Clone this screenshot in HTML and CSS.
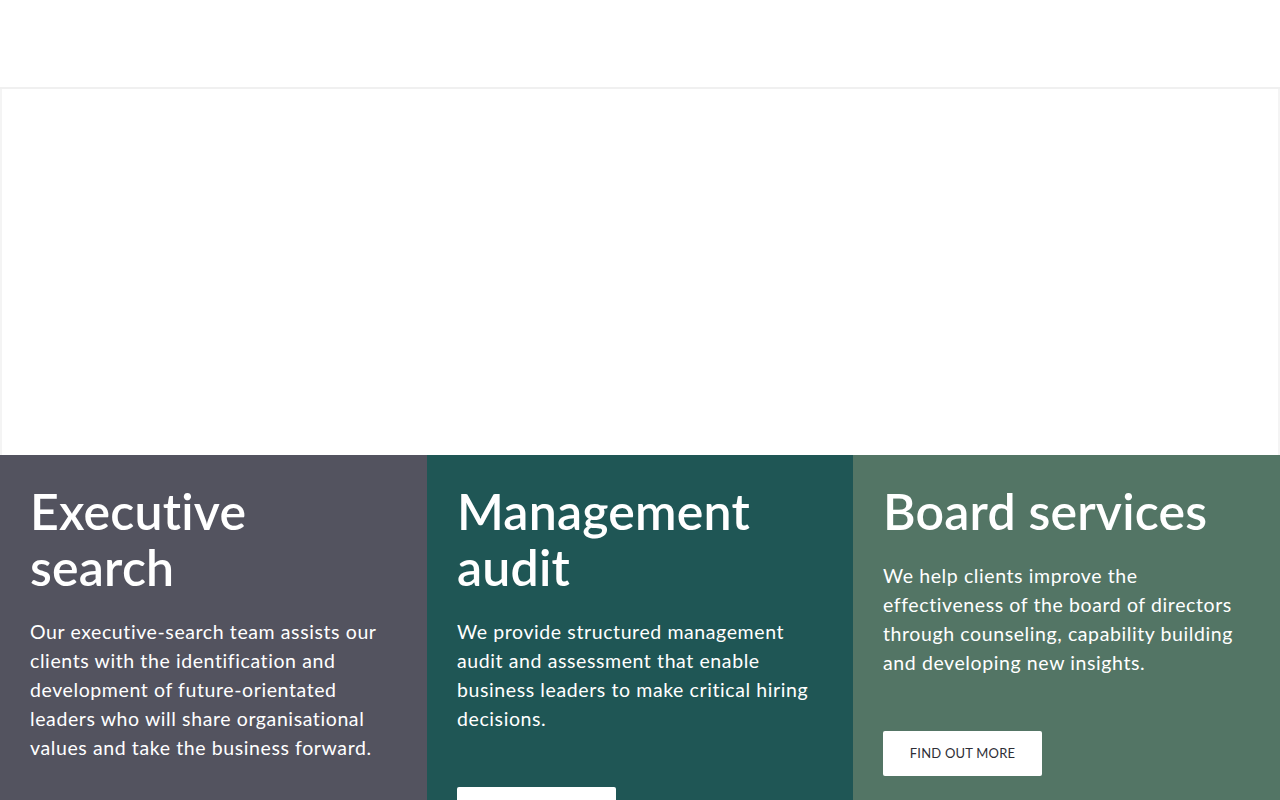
FILE: index.html
```html
<!DOCTYPE html>
<html lang="en">
<head>
    <meta charset="UTF-8">
    <meta name="viewport" content="width=device-width, initial-scale=1.0">
    <title>Services</title>
    <link rel="stylesheet" href="styles.css">
</head>
<body>

<header class="site-header"></header>

<div class="hero"></div>

<div class="services">
    <div class="service service-search">
        <h2>Executive search</h2>
        <p>Our executive-search team assists our clients with the identification and development of future-orientated leaders who will share organisational values and take the business forward.</p>
        <a class="more" href="#">Find out more</a>
    </div>
    <div class="service service-audit">
        <h2>Management audit</h2>
        <p>We provide structured management audit and assessment that enable business leaders to make critical hiring decisions.</p>
        <a class="more" href="#">Find out more</a>
    </div>
    <div class="service service-board">
        <h2>Board services</h2>
        <p>We help clients improve the effectiveness of the board of directors through counseling, capability building and developing new insights.</p>
        <a class="more" href="#">Find out more</a>
    </div>
</div>

</body>
</html>
```

FILE: styles.css
```css
body {
    font-family: Lato, "Open Sans", Arial, sans-serif;
    margin: 0;
    background: #fff;
    overflow: hidden;
}
.site-header {
    height: 87px;
    border-bottom: 2px solid #f0f0f0;
}
.hero {
    height: 366px;
    border-left: 2px solid #f4f4f4;
    border-right: 2px solid #f4f4f4;
}
.services {
    display: grid;
    grid-template-columns: 427px 426px 427px;
    height: 400px;
}
.service {
    padding: 28px 30px 0 30px;
    color: #fff;
}
.service-search {
    background: #53535f;
}
.service-audit {
    background: #1f5655;
}
.service-board {
    background: #537565;
}
.service h2 {
    font-size: 50px;
    line-height: 56px;
    font-weight: 600;
    letter-spacing: 0.2px;
    margin: 0 0 22px 0;
    max-width: 340px;
}
.service p {
    font-size: 19.5px;
    line-height: 29px;
    letter-spacing: 0.6px;
    margin: 0 0 54px 0;
    max-width: 360px;
}
.more {
    display: inline-block;
    width: 159px;
    height: 45px;
    line-height: 45px;
    text-align: center;
    background: #fff;
    border-radius: 2px;
    color: #2e2e36;
    font-size: 13px;
    letter-spacing: 0.2px;
    text-transform: uppercase;
    text-decoration: none;
}
```
